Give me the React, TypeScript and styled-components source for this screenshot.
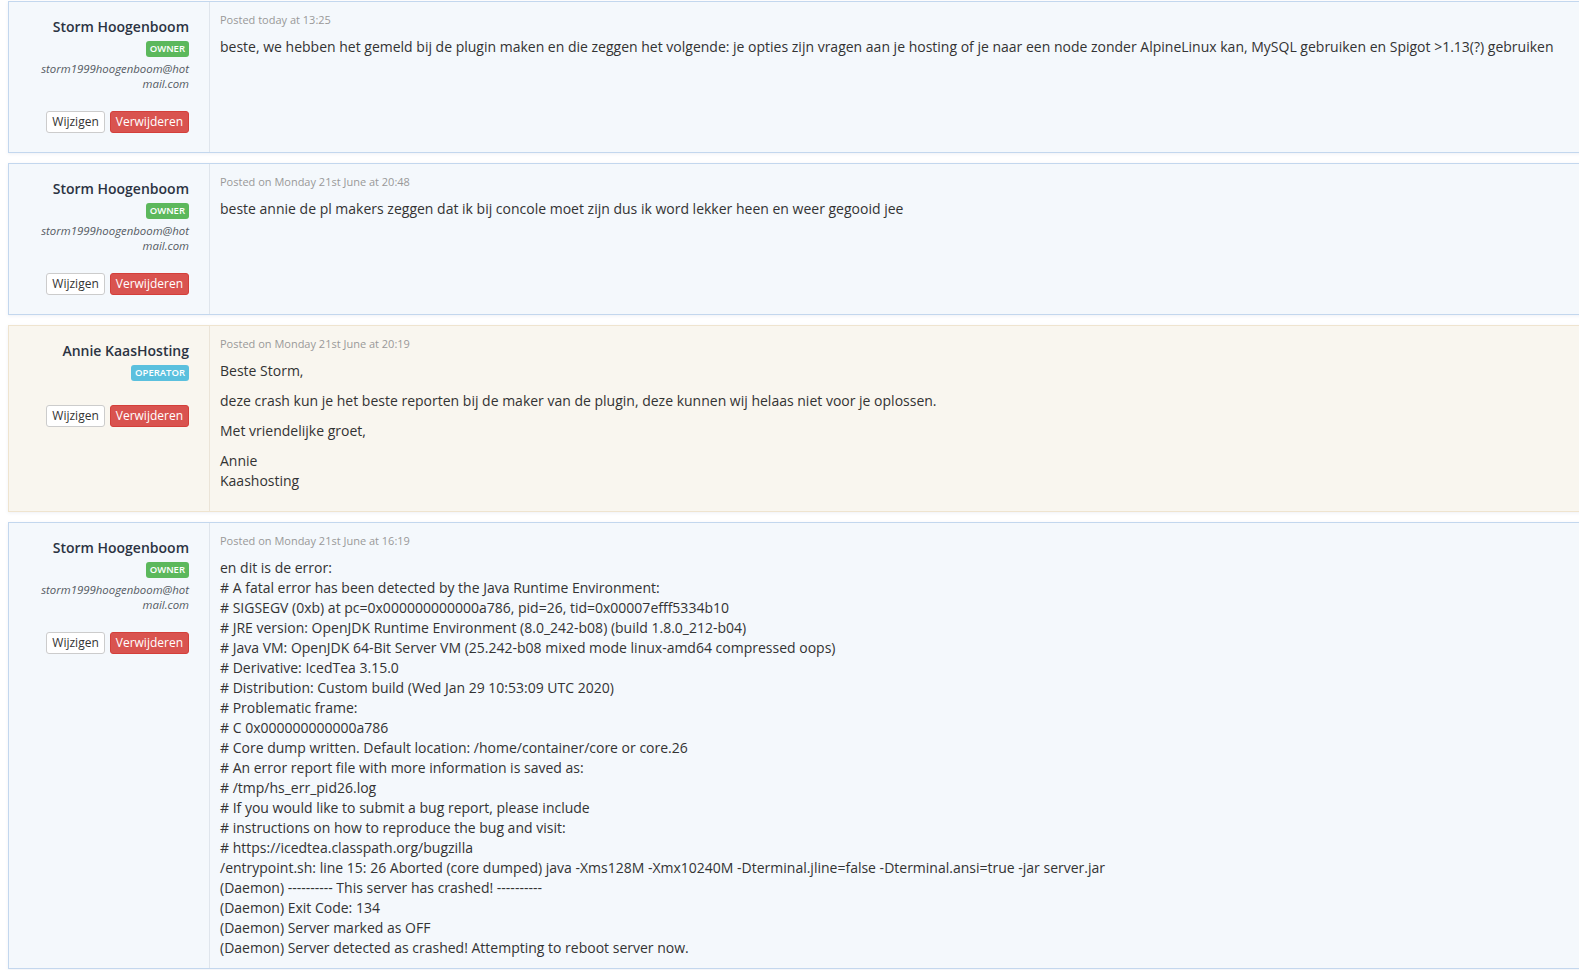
import React from "react";
import styled, { createGlobalStyle } from "styled-components";

const GlobalStyle = createGlobalStyle`
  html, body {
    margin: 0;
    padding: 0;
    background: #ffffff;
    overflow: hidden;
  }
  body {
    font-family: "Open Sans", "Noto Sans", "Liberation Sans", sans-serif;
    font-size: 14px;
    line-height: 20px;
    color: #333333;
  }
  * { box-sizing: border-box; }
`;

const Thread = styled.div`
  padding: 1px 0 0 8px;
  width: 1620px;
`;

const Card = styled.div<{ $staff?: boolean }>`
  display: flex;
  margin-bottom: 10px;
  background: ${(p) => (p.$staff ? "#f9f6ef" : "#f4f8fc")};
  border: 1px solid ${(p) => (p.$staff ? "#efe4cf" : "#c3d7ee")};
  box-shadow: 0 1px 3px rgba(120, 140, 170, 0.12);
`;

const Author = styled.div<{ $staff?: boolean }>`
  flex: 0 0 201px;
  display: flex;
  flex-direction: column;
  align-items: flex-end;
  text-align: right;
  padding: 15px 20px 19px 20px;
  border-right: 1px solid ${(p) => (p.$staff ? "#ebe4d8" : "#dfe5ec")};
`;

const Name = styled.div`
  font-size: 14px;
  font-weight: 600;
  line-height: 20px;
  color: #2b3342;
`;

const Badge = styled.span<{ $kind: "owner" | "operator" }>`
  margin-top: 4px;
  display: inline-block;
  height: 16px;
  padding: 0 4px;
  border-radius: 3px;
  font-size: 9.5px;
  font-weight: 600;
  line-height: 16px;
  color: #ffffff;
  text-transform: uppercase;
  background: ${(p) => (p.$kind === "owner" ? "#5cb85c" : "#5bc0de")};
`;

const Email = styled.div`
  margin-top: 4px;
  width: 156px;
  font-size: 11.4px;
  font-style: italic;
  line-height: 15px;
  color: #555b63;
  word-break: break-all;
`;

const Actions = styled.div<{ $afterEmail?: boolean }>`
  display: flex;
  gap: 5px;
  margin-top: ${(p) => (p.$afterEmail ? "20px" : "24px")};
`;

const Button = styled.button<{ $danger?: boolean }>`
  font-family: "Open Sans", "Noto Sans", sans-serif;
  font-size: 12px;
  line-height: 18px;
  padding: 1px 5px;
  border-radius: 3px;
  cursor: pointer;
  color: ${(p) => (p.$danger ? "#ffffff" : "#333333")};
  background: ${(p) => (p.$danger ? "#d9534f" : "#ffffff")};
  border: 1px solid ${(p) => (p.$danger ? "#d43f3a" : "#cccccc")};
`;

const Body = styled.div`
  flex: 1;
  padding: 10px;
`;

const Meta = styled.div`
  font-size: 11px;
  line-height: 16px;
  color: #999999;
  margin-bottom: 9px;
`;

const Para = styled.p`
  margin: 0 0 10px 0;
  white-space: nowrap;
`;

const Log = styled.div`
  white-space: pre;
`;

type Post = {
  name: string;
  role: "owner" | "operator";
  email?: string;
  posted: string;
  paragraphs?: string[][];
  log?: string;
};

const logText = [
  "en dit is de error:",
  "# A fatal error has been detected by the Java Runtime Environment:",
  "# SIGSEGV (0xb) at pc=0x000000000000a786, pid=26, tid=0x00007efff5334b10",
  "# JRE version: OpenJDK Runtime Environment (8.0_242-b08) (build 1.8.0_212-b04)",
  "# Java VM: OpenJDK 64-Bit Server VM (25.242-b08 mixed mode linux-amd64 compressed oops)",
  "# Derivative: IcedTea 3.15.0",
  "# Distribution: Custom build (Wed Jan 29 10:53:09 UTC 2020)",
  "# Problematic frame:",
  "# C 0x000000000000a786",
  "# Core dump written. Default location: /home/container/core or core.26",
  "# An error report file with more information is saved as:",
  "# /tmp/hs_err_pid26.log",
  "# If you would like to submit a bug report, please include",
  "# instructions on how to reproduce the bug and visit:",
  "# https://icedtea.classpath.org/bugzilla",
  "/entrypoint.sh: line 15: 26 Aborted (core dumped) java -Xms128M -Xmx10240M -Dterminal.jline=false -Dterminal.ansi=true -jar server.jar",
  "(Daemon) ---------- This server has crashed! ----------",
  "(Daemon) Exit Code: 134",
  "(Daemon) Server marked as OFF",
  "(Daemon) Server detected as crashed! Attempting to reboot server now.",
].join("\n");

const posts: Post[] = [
  {
    name: "Storm Hoogenboom",
    role: "owner",
    email: "storm1999hoogenboom@hotmail.com",
    posted: "Posted today at 13:25",
    paragraphs: [
      [
        "beste, we hebben het gemeld bij de plugin maken en die zeggen het volgende: je opties zijn vragen aan je hosting of je naar een node zonder AlpineLinux kan, MySQL gebruiken en Spigot >1.13(?) gebruiken",
      ],
    ],
  },
  {
    name: "Storm Hoogenboom",
    role: "owner",
    email: "storm1999hoogenboom@hotmail.com",
    posted: "Posted on Monday 21st June at 20:48",
    paragraphs: [
      ["beste annie de pl makers zeggen dat ik bij concole moet zijn dus ik word lekker heen en weer gegooid jee"],
    ],
  },
  {
    name: "Annie KaasHosting",
    role: "operator",
    posted: "Posted on Monday 21st June at 20:19",
    paragraphs: [
      ["Beste Storm,"],
      ["deze crash kun je het beste reporten bij de maker van de plugin, deze kunnen wij helaas niet voor je oplossen."],
      ["Met vriendelijke groet,"],
      ["Annie", "Kaashosting"],
    ],
  },
  {
    name: "Storm Hoogenboom",
    role: "owner",
    email: "storm1999hoogenboom@hotmail.com",
    posted: "Posted on Monday 21st June at 16:19",
    log: logText,
  },
];

export default function App() {
  return (
    <>
      <GlobalStyle />
      <Thread>
        {posts.map((post, i) => {
          const staff = post.role === "operator";
          return (
            <Card key={i} $staff={staff}>
              <Author $staff={staff}>
                <Name>{post.name}</Name>
                <Badge $kind={post.role}>{post.role === "owner" ? "Owner" : "Operator"}</Badge>
                {post.email && <Email>{post.email}</Email>}
                <Actions $afterEmail={!!post.email}>
                  <Button>Wijzigen</Button>
                  <Button $danger>Verwijderen</Button>
                </Actions>
              </Author>
              <Body>
                <Meta>{post.posted}</Meta>
                {post.paragraphs?.map((lines, j) => (
                  <Para key={j}>
                    {lines.map((l, k) => (
                      <React.Fragment key={k}>
                        {k > 0 && <br />}
                        {l}
                      </React.Fragment>
                    ))}
                  </Para>
                ))}
                {post.log && <Log>{post.log}</Log>}
              </Body>
            </Card>
          );
        })}
      </Thread>
    </>
  );
}
